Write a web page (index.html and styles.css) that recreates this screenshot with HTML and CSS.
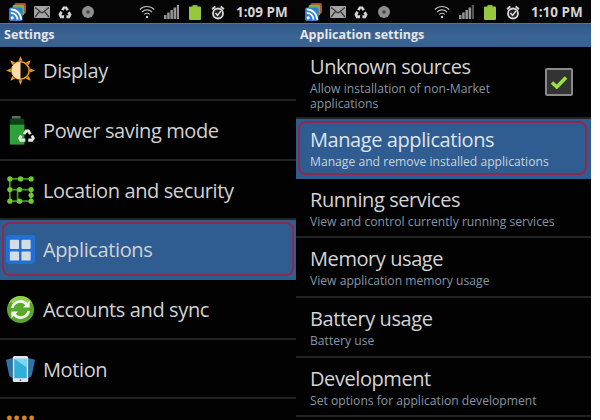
FILE: index.html
```html
<!DOCTYPE html>
<html lang="en">
<head>
<meta charset="utf-8">
<title>Android settings</title>
<link rel="stylesheet" href="styles.css">
</head>
<body>
<main class="screens">
  <section class="phone phone-left">
    <header class="status">
      <div class="status-left">
        <svg class="ic-rss" viewBox="0 0 20 20"><rect x="6" y="0" width="13" height="12" rx="2" fill="#b5473d"/><rect x="4" y="2" width="13" height="12" rx="2" fill="#7fae4e"/><rect x="0" y="5" width="15" height="15" rx="2" fill="#2f7fd6"/><circle cx="3.5" cy="16.5" r="1.7" fill="#fff"/><path d="M2 11a7.500 7.500 0 0 1 7.500 7.500M2 7a11.500 11.500 0 0 1 11.500 11.500" fill="none" stroke="#fff" stroke-width="2"/></svg>
        <svg class="ic-mail" viewBox="0 0 16 12"><rect width="16" height="12" rx="1" fill="#a3a3a3"/><path d="M1 1.500 8 7l7-5.500M1 11l4.500-5.500M15 11l-4.500-5.500" fill="none" stroke="#3a3a3a" stroke-width="1.200"/></svg>
        <svg class="ic-recycle" viewBox="0 0 16 16"><path d="M6 1.500h4l2 3.500-2.500 1.200L8 3.500 6.500 6 4 4.800zM1 10l2-3.500 2.500 1.500L4 10.800h3V14H3zM15 10l-2-3 -2.500 1.500 1.500 2.300H9.500V14H13z" fill="#d6d6d6"/></svg>
        <svg class="ic-dot" viewBox="0 0 12 12"><circle cx="6" cy="6" r="6" fill="#8e8e8e"/><circle cx="6" cy="6" r="1.800" fill="#444"/></svg>
      </div>
      <div class="status-right">
        <svg class="ic-wifi" viewBox="0 0 16 14"><path d="M.8 4.500a10 10 0 0 1 14.400 0M3 7a7 7 0 0 1 10 0M5.200 9.500a3.800 3.800 0 0 1 5.600 0" fill="none" stroke="#bdbdbd" stroke-width="1.100"/><circle cx="8" cy="12" r="1.200" fill="#d0d0d0"/></svg>
        <svg class="ic-signal" viewBox="0 0 15 14"><path d="M0 10h2.500v4H0zM3.200 7.500h2.500V14H3.200zM6.400 5h2.500v9H6.400zM9.600 2.500h2.500V14H9.600zM12.800 0H15v14h-2.200z" fill="#969696"/></svg>
        <svg class="ic-batt" viewBox="0 0 12 15"><rect x="3.500" y="0" width="5" height="2" fill="#8fae50"/><rect y="1.500" width="12" height="13.500" rx="1" fill="#95c83c"/></svg>
        <svg class="ic-alarm" viewBox="0 0 14 15"><circle cx="7" cy="8.500" r="5" fill="#222" stroke="#d8d8d8" stroke-width="1.800"/><path d="M4.500 8 6.500 10.500 10 6" fill="none" stroke="#e8e8e8" stroke-width="1.300"/><path d="M.5 3.500 3.500.8 5 2 1.800 5zM13.500 3.500 10.500.8 9 2l3.200 3z" fill="#d8d8d8"/></svg>
        <span class="clock">1:09 PM</span>
      </div>
    </header>
    <h1 class="titlebar">Settings</h1>
    <ul class="menu">
      <li class="menu-row menu-first">
        <svg class="row-icon" viewBox="0 0 30 30"><g fill="#ee9a2c"><path d="M15 0l2 5h-4zM15 30l2-5h-4zM0 15l5-2v4zM30 15l-5-2v4zM4.400 4.400l5 2-3 3zM25.600 25.600l-5-2 3-3zM4.400 25.600l2-5 3 3zM25.600 4.400l-2 5-3-3z"/></g><circle cx="15" cy="15" r="9" fill="#120c04" stroke="#f0a030" stroke-width="1.600"/><path d="M15 6a9 9 0 0 0 0 18z" fill="#fbdcaa"/></svg>
        <span class="row-text">Display</span>
      </li>
      <li class="menu-row">
        <svg class="row-icon" viewBox="0 0 30 30"><rect x="6" y="0" width="9" height="3" fill="#5f6f55"/><rect x="4" y="2.500" width="15" height="27" rx="2" fill="#123f18"/><rect x="4" y="9" width="15" height="20.500" fill="#2fa13a"/><path d="M20 14h4l2.500 4-2.500 1.500-2-3-2 3-2.500-1.500zM12.500 23l2-3.500 2.500 1.500-1.200 2.200H20v3.500h-5.500zM30 23l-2-3.500-2.500 1.500 1.200 2.200H23v3.500h4.500z" fill="#e2e7e2"/></svg>
        <span class="row-text">Power saving mode</span>
      </li>
      <li class="menu-row">
        <svg class="row-icon" viewBox="0 0 30 30"><path d="M4 3h22M4 3v23h22v-6M12 14h14v6M12 14v12M4 14h8" fill="none" stroke="#3f9a1c" stroke-width="1.800"/><g fill="#6ecb2e"><circle cx="4" cy="3" r="2.700"/><circle cx="15" cy="3" r="2.700"/><circle cx="26" cy="3" r="2.700"/><circle cx="4" cy="14" r="2.700"/><circle cx="14" cy="14" r="2.700"/><circle cx="26" cy="14" r="2.700"/><circle cx="26" cy="20" r="2.700"/><circle cx="4" cy="26" r="2.700"/><circle cx="14" cy="26" r="2.700"/><circle cx="26" cy="26" r="2.700"/></g></svg>
        <span class="row-text">Location and security</span>
      </li>
      <li class="menu-row menu-active">
        <svg class="row-icon" viewBox="0 0 30 30"><rect width="30" height="30" rx="3" fill="#2070d8"/><rect x="4" y="5" width="9.500" height="9.500" rx="1" fill="#d5dce6"/><rect x="16" y="5" width="9.500" height="9.500" rx="1" fill="#d5dce6"/><rect x="4" y="17" width="9.500" height="9.500" rx="1" fill="#d5dce6"/><rect x="16" y="17" width="9.500" height="9.500" rx="1" fill="#d5dce6"/></svg>
        <span class="row-text">Applications</span>
      </li>
      <li class="menu-row">
        <svg class="row-icon" viewBox="0 0 30 30"><circle cx="15" cy="15" r="14" fill="#58a82a"/><path d="M15 1a14 14 0 0 1 12 7H3a14 14 0 0 1 12-7z" fill="#92d050"/><path d="M6.500 13.500A8.500 8.500 0 0 1 21.500 10M23.500 16.500A8.500 8.500 0 0 1 8.500 20" fill="none" stroke="#f2f6ee" stroke-width="2.800"/><path d="M24.500 6v7h-7zM5.500 24v-7h7z" fill="#f2f6ee"/></svg>
        <span class="row-text">Accounts and sync</span>
      </li>
      <li class="menu-row">
        <svg class="row-icon" viewBox="0 0 30 30"><path d="M7 3 0 5l3.500 17 3.500 2zM23 3l7 2-3.500 17-3.500 2z" fill="#2c74ad"/><rect x="7" y="1" width="16" height="27" rx="2" fill="#dfe7ee"/><rect x="8.500" y="4" width="13" height="20" fill="#2fb0d8"/><path d="M8.500 4h13v9z" fill="#7fd4ee"/><circle cx="15" cy="26" r="1" fill="#667"/></svg>
        <span class="row-text">Motion</span>
      </li>
      <li class="menu-row">
        <svg class="row-icon" viewBox="0 0 30 30"><g fill="#d9861e"><circle cx="3.500" cy="4" r="2.500"/><circle cx="11" cy="4" r="2.500"/><circle cx="19" cy="4" r="2.500"/><circle cx="26.500" cy="4" r="2.500"/></g></svg>
      </li>
    </ul>
  </section>
  <section class="phone phone-right">
    <header class="status">
      <div class="status-left">
        <svg class="ic-rss" viewBox="0 0 20 20"><rect x="6" y="0" width="13" height="12" rx="2" fill="#b5473d"/><rect x="4" y="2" width="13" height="12" rx="2" fill="#7fae4e"/><rect x="0" y="5" width="15" height="15" rx="2" fill="#2f7fd6"/><circle cx="3.500" cy="16.500" r="1.700" fill="#fff"/><path d="M2 11a7.500 7.500 0 0 1 7.500 7.500M2 7a11.500 11.500 0 0 1 11.500 11.500" fill="none" stroke="#fff" stroke-width="2"/></svg>
        <svg class="ic-mail" viewBox="0 0 16 12"><rect width="16" height="12" rx="1" fill="#a3a3a3"/><path d="M1 1.500 8 7l7-5.500M1 11l4.500-5.500M15 11l-4.500-5.500" fill="none" stroke="#3a3a3a" stroke-width="1.200"/></svg>
        <svg class="ic-recycle" viewBox="0 0 16 16"><path d="M6 1.500h4l2 3.500-2.500 1.200L8 3.500 6.500 6 4 4.800zM1 10l2-3.500 2.500 1.500L4 10.800h3V14H3zM15 10l-2-3 -2.500 1.500 1.500 2.300H9.500V14H13z" fill="#d6d6d6"/></svg>
        <svg class="ic-dot" viewBox="0 0 12 12"><circle cx="6" cy="6" r="6" fill="#8e8e8e"/><circle cx="6" cy="6" r="1.800" fill="#444"/></svg>
      </div>
      <div class="status-right">
        <svg class="ic-wifi" viewBox="0 0 16 14"><path d="M.8 4.500a10 10 0 0 1 14.400 0M3 7a7 7 0 0 1 10 0M5.200 9.500a3.800 3.800 0 0 1 5.600 0" fill="none" stroke="#bdbdbd" stroke-width="1.100"/><circle cx="8" cy="12" r="1.200" fill="#d0d0d0"/></svg>
        <svg class="ic-signal" viewBox="0 0 15 14"><path d="M0 10h2.500v4H0zM3.200 7.500h2.500V14H3.200zM6.400 5h2.500v9H6.400zM9.600 2.500h2.500V14H9.600z" fill="#969696"/><path d="M12.800 0H15v14h-2.200z" fill="#555"/></svg>
        <svg class="ic-batt" viewBox="0 0 12 15"><rect x="3.500" y="0" width="5" height="2" fill="#8fae50"/><rect y="1.500" width="12" height="13.500" rx="1" fill="#95c83c"/></svg>
        <svg class="ic-alarm" viewBox="0 0 14 15"><circle cx="7" cy="8.500" r="5" fill="#222" stroke="#d8d8d8" stroke-width="1.800"/><path d="M4.500 8 6.500 10.500 10 6" fill="none" stroke="#e8e8e8" stroke-width="1.300"/><path d="M.5 3.500 3.500.8 5 2 1.800 5zM13.500 3.500 10.500.8 9 2l3.200 3z" fill="#d8d8d8"/></svg>
        <span class="clock">1:10 PM</span>
      </div>
    </header>
    <h1 class="titlebar">Application settings</h1>
    <ul class="options">
      <li class="opt opt-first">
        <div class="opt-body">
          <div class="opt-title">Unknown sources</div>
          <div class="opt-sub">Allow installation of non-Market<br>applications</div>
        </div>
        <div class="checkbox">
          <svg class="check" viewBox="0 0 18 14"><path d="M2 7.500 6.800 12 16 2.500" fill="none" stroke="#9be03c" stroke-width="3.600"/></svg>
        </div>
      </li>
      <li class="opt opt-active">
        <div class="opt-body">
          <div class="opt-title">Manage applications</div>
          <div class="opt-sub">Manage and remove installed applications</div>
        </div>
      </li>
      <li class="opt">
        <div class="opt-body">
          <div class="opt-title">Running services</div>
          <div class="opt-sub">View and control currently running services</div>
        </div>
      </li>
      <li class="opt">
        <div class="opt-body">
          <div class="opt-title">Memory usage</div>
          <div class="opt-sub">View application memory usage</div>
        </div>
      </li>
      <li class="opt">
        <div class="opt-body">
          <div class="opt-title">Battery usage</div>
          <div class="opt-sub">Battery use</div>
        </div>
      </li>
      <li class="opt">
        <div class="opt-body">
          <div class="opt-title">Development</div>
          <div class="opt-sub">Set options for application development</div>
        </div>
      </li>
    </ul>
  </section>
</main>
</body>
</html>
```
FILE: styles.css
```css
* { box-sizing: border-box; }
html, body { margin: 0; height: 420px; overflow: hidden; background: #fff; }
body { font-family: "Open Sans", "Noto Sans", sans-serif; }
.screens { display: flex; height: 420px; width: 591px; }
.phone { width: 296px; height: 420px; background: #020202; overflow: hidden; flex: none; }
.phone-right { width: 295px; }

.status { height: 23px; display: flex; justify-content: space-between; align-items: center; padding: 1px 6px 0 9px; background: #050505; }
.status-left, .status-right { display: flex; align-items: center; }
.ic-rss { width: 18px; height: 18px; margin-right: 7px; }
.ic-mail { width: 16px; height: 12px; margin-right: 7px; }
.ic-recycle { width: 16px; height: 15px; margin-right: 9px; }
.ic-dot { width: 12px; height: 12px; }
.ic-wifi { width: 16px; height: 14px; margin-right: 9px; }
.ic-signal { width: 15px; height: 14px; margin-right: 10px; }
.ic-batt { width: 12px; height: 15px; margin-right: 10px; }
.ic-alarm { width: 14px; height: 15px; margin-right: 11px; }
.clock { color: #d4d4d4; font-size: 13.500px; font-weight: 700; width: 54px; white-space: nowrap; }

.titlebar { margin: 0; height: 24px; background: linear-gradient(#30588a, #3c6595 60%, #35608f); border-top: 1px solid #4a74a5; color: #e6e6e6; font-size: 12.500px; font-weight: 700; line-height: 22px; padding-left: 4px; }

.menu, .options { list-style: none; margin: 0; padding: 0; }
.menu-row { height: 59.700px; display: flex; align-items: center; padding-left: 6px; padding-top: 1px; border-bottom: 2px solid #232323; position: relative; }
.menu-first { height: 54px; padding-top: 0; padding-bottom: 6px; }
.row-icon { width: 29px; height: 29px; margin-right: 8px; flex: none; }
.row-text { color: #d2d2d2; font-size: 20px; letter-spacing: -.38px; white-space: nowrap; }
.menu-active { background: #2f5d92; border-bottom-color: #2f5d92; }
.menu-active::after, .opt-active::after { content: ""; position: absolute; left: 2px; top: 2px; right: 2px; bottom: 2px; border: 2px solid #8f2a4e; border-radius: 8px; }
.opt-active::after { right: 4px; }

.opt { height: 59.700px; display: flex; align-items: center; justify-content: space-between; padding-left: 14px; padding-right: 18px; border-bottom: 2px solid #232323; position: relative; }
.opt-first { height: 72px; }
.opt-body { min-width: 0; }
.opt-title { color: #d4d4d4; font-size: 20px; letter-spacing: -.42px; line-height: 25px; white-space: nowrap; }
.opt-sub { color: #8595a8; font-size: 12.150px; line-height: 15px; white-space: nowrap; margin-top: 2px; }
.opt-active { background: #2f5d92; border-bottom-color: #2f5d92; }
.opt-active .opt-sub { color: #c9d2dc; }
.opt-active .opt-title { color: #dfe4ea; }
.checkbox { width: 28px; height: 28px; background: #333; border: 2px solid #8a8a8a; border-radius: 2px; display: flex; align-items: center; justify-content: center; }
.check { width: 18px; height: 14px; }
```
